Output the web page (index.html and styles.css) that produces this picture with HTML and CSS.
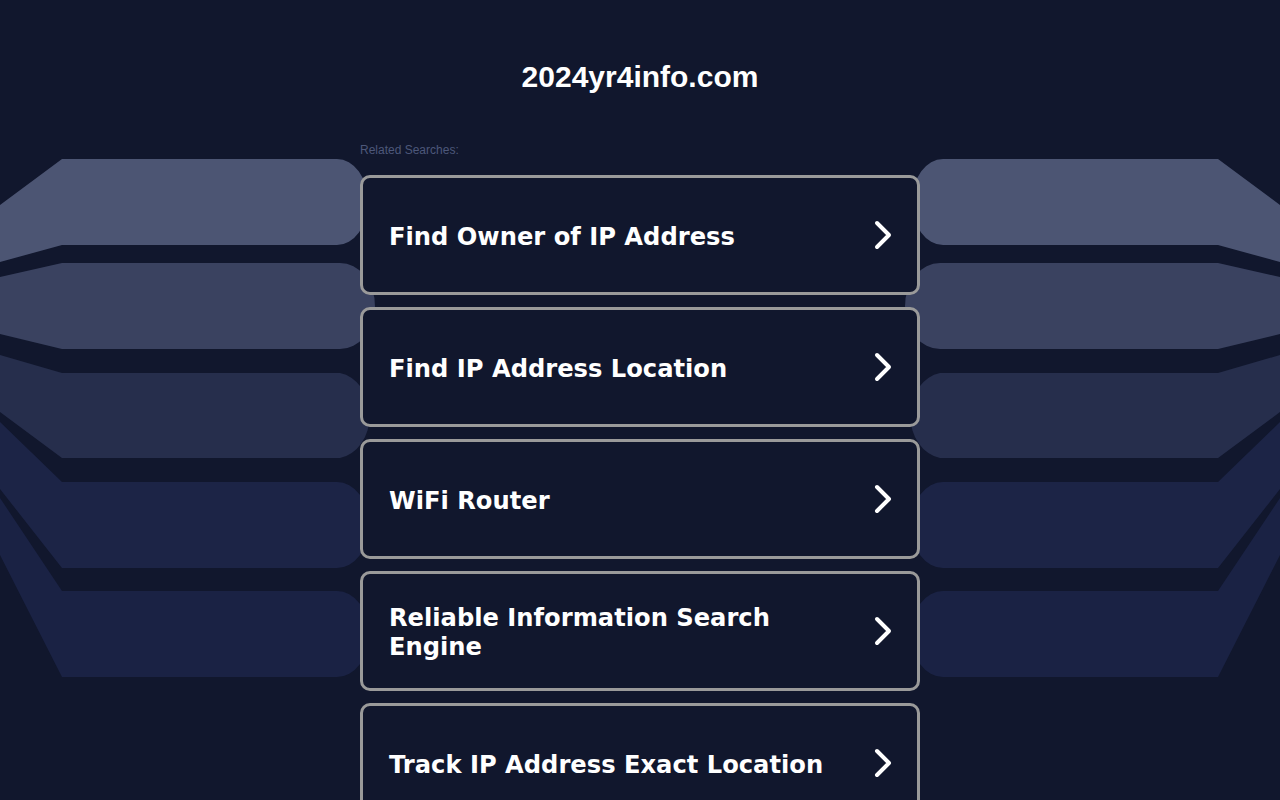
FILE: index.html
```html
<!DOCTYPE html>
<html lang="en">
<head>
<meta charset="utf-8">
<title>2024yr4info.com</title>
<link rel="stylesheet" href="styles.css">
</head>
<body>
<svg class="bg" width="1280" height="800" viewBox="0 0 1280 800" aria-hidden="true">
  <defs>
    <pattern id="dots" width="3" height="3" patternUnits="userSpaceOnUse">
      <rect x="0" y="0" width="1" height="1" fill="#ffffff" fill-opacity="0.05"/>
    </pattern>
    <g id="bands">
      <path d="M0,205 L62,159 L337,159 A31,43 0 0 1 337,245 L62,245 L0,262 Z" fill="#4c5573"/>
      <path d="M0,277 L62,263 L340,263 A35,43 0 0 1 340,349 L62,349 L0,334 Z" fill="#3a4260"/>
      <path d="M0,355 L62,373 L340,373 A35,43 0 0 1 340,458 L62,458 L0,412 Z" fill="#262e4c"/>
      <path d="M0,422 L62,482 L337,482 A32,43 0 0 1 337,568 L62,568 L0,489 Z" fill="#1c2446"/>
      <path d="M0,498 L62,591 L337,591 A32,43 0 0 1 337,677 L62,677 L0,555 Z" fill="#1a2244"/>
    </g>
    <clipPath id="bandclip">
      <use href="#bands"/>
      <use href="#bands" transform="translate(1280,0) scale(-1,1)"/>
    </clipPath>
  </defs>
  <use href="#bands"/>
  <use href="#bands" transform="translate(1280,0) scale(-1,1)"/>
  <rect x="0" y="0" width="1280" height="800" fill="url(#dots)" clip-path="url(#bandclip)"/>
</svg>
<main class="page">
  <h1 class="title">2024yr4info.com</h1>
  <section class="related">
    <p class="label">Related Searches:</p>
    <ul class="list">
      <li><a class="card" href="#"><span class="card-text">Find Owner of IP Address</span><svg class="chev" width="20" height="30" viewBox="0 0 20 30"><path d="M4,3 L16,15 L4,27" fill="none" stroke="#fff" stroke-width="4" stroke-linecap="round" stroke-linejoin="round"/></svg></a></li>
      <li><a class="card" href="#"><span class="card-text">Find IP Address Location</span><svg class="chev" width="20" height="30" viewBox="0 0 20 30"><path d="M4,3 L16,15 L4,27" fill="none" stroke="#fff" stroke-width="4" stroke-linecap="round" stroke-linejoin="round"/></svg></a></li>
      <li><a class="card" href="#"><span class="card-text">WiFi Router</span><svg class="chev" width="20" height="30" viewBox="0 0 20 30"><path d="M4,3 L16,15 L4,27" fill="none" stroke="#fff" stroke-width="4" stroke-linecap="round" stroke-linejoin="round"/></svg></a></li>
      <li><a class="card" href="#"><span class="card-text">Reliable Information Search Engine</span><svg class="chev" width="20" height="30" viewBox="0 0 20 30"><path d="M4,3 L16,15 L4,27" fill="none" stroke="#fff" stroke-width="4" stroke-linecap="round" stroke-linejoin="round"/></svg></a></li>
      <li><a class="card" href="#"><span class="card-text">Track IP Address Exact Location</span><svg class="chev" width="20" height="30" viewBox="0 0 20 30"><path d="M4,3 L16,15 L4,27" fill="none" stroke="#fff" stroke-width="4" stroke-linecap="round" stroke-linejoin="round"/></svg></a></li>
    </ul>
  </section>
</main>
</body>
</html>
```
FILE: styles.css
```css
html, body {
  margin: 0;
  padding: 0;
}
body {
  background: #11172d;
  font-family: "Liberation Sans", Arial, sans-serif;
  color: #fff;
  height: 800px;
  overflow: hidden;
  position: relative;
}
.bg {
  position: absolute;
  left: 0;
  top: 0;
  z-index: 0;
}
.page {
  position: relative;
  z-index: 1;
  width: 560px;
  margin: 0 auto;
  display: flex;
  flex-direction: column;
}
.title {
  margin: 0;
  padding-top: 59px;
  font-size: 30px;
  line-height: 36px;
  font-weight: bold;
  text-align: center;
  color: #fff;
}
.related {
  margin-top: 47px;
}
.label {
  margin: 0 0 17px 0;
  font-size: 12px;
  line-height: 16px;
  color: #4d577a;
}
.list {
  list-style: none;
  margin: 0;
  padding: 0;
  display: flex;
  flex-direction: column;
  gap: 12px;
}
.card {
  box-sizing: border-box;
  height: 120px;
  border: 3px solid #9a9a9a;
  border-radius: 10px;
  background: #11172d;
  display: flex;
  align-items: center;
  justify-content: space-between;
  padding: 0 24px 0 26px;
  text-decoration: none;
  color: #fff;
}
.card-text {
  font-family: "DejaVu Sans", Verdana, sans-serif;
  font-weight: bold;
  font-size: 24.2px;
  line-height: 29px;
  max-width: 450px;
  margin-top: 4px;
}
.chev {
  flex: none;
}
```
